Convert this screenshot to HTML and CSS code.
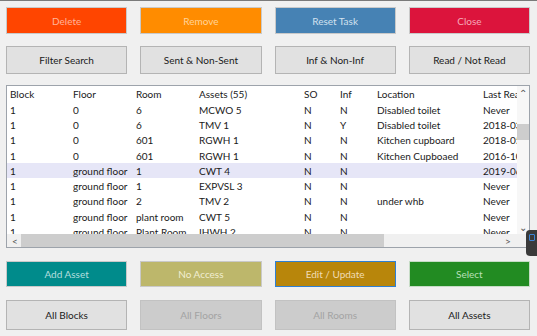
FILE: index.html
```html
<!DOCTYPE html>
<html>
<head>
<meta charset="utf-8">
<link rel="stylesheet" href="styles.css">
</head>
<body>
<div class="app">
  <div class="btn-row r1">
    <button class="btn c-delete">Delete</button>
    <button class="btn c-remove">Remove</button>
    <button class="btn c-reset">Reset Task</button>
    <button class="btn c-close">Close</button>
  </div>
  <div class="btn-row r2">
    <button class="btn plain">Filter Search</button>
    <button class="btn plain">Sent &amp; Non-Sent</button>
    <button class="btn plain">Inf &amp; Non-Inf</button>
    <button class="btn plain">Read / Not Read</button>
  </div>
  <div class="grid-box">
    <div class="grid-view">
      <table class="list">
        <colgroup>
          <col class="w-block"><col class="w-floor"><col class="w-room"><col class="w-asset"><col class="w-so"><col class="w-inf"><col class="w-loc"><col class="w-last">
        </colgroup>
        <thead>
          <tr><th>Block</th><th>Floor</th><th>Room</th><th>Assets (55)</th><th>SO</th><th>Inf</th><th>Location</th><th>Last Read</th></tr>
        </thead>
        <tbody>
          <tr><td>1</td><td>0</td><td>6</td><td>MCWO 5</td><td>N</td><td>N</td><td>Disabled toilet</td><td>Never</td></tr>
          <tr><td>1</td><td>0</td><td>6</td><td>TMV 1</td><td>N</td><td>Y</td><td>Disabled toilet</td><td>2018-03-12</td></tr>
          <tr><td>1</td><td>0</td><td>601</td><td>RGWH 1</td><td>N</td><td>N</td><td>Kitchen cupboard</td><td>2018-05-04</td></tr>
          <tr><td>1</td><td>0</td><td>601</td><td>RGWH 1</td><td>N</td><td>N</td><td>Kitchen Cupboaed</td><td>2016-10-20</td></tr>
          <tr class="sel"><td>1</td><td>ground floor</td><td>1</td><td>CWT 4</td><td>N</td><td>N</td><td></td><td>2019-06-11</td></tr>
          <tr><td>1</td><td>ground floor</td><td>1</td><td>EXPVSL 3</td><td>N</td><td>N</td><td></td><td>Never</td></tr>
          <tr><td>1</td><td>ground floor</td><td>2</td><td>TMV 2</td><td>N</td><td>N</td><td>under whb</td><td>Never</td></tr>
          <tr><td>1</td><td>ground floor</td><td>plant room</td><td>CWT 5</td><td>N</td><td>N</td><td></td><td>Never</td></tr>
          <tr><td>1</td><td>ground floor</td><td>Plant Room</td><td>IHWH 2</td><td>N</td><td>N</td><td></td><td>Never</td></tr>
        </tbody>
      </table>
    </div>
    <div class="vscroll">
      <span class="arr">&#8963;</span>
      <div class="vtrack"><div class="vthumb"></div></div>
      <span class="arr">&#8964;</span>
    </div>
    <div class="hscroll">
      <span class="harr">&lt;</span>
      <div class="htrack"><div class="hthumb"></div></div>
      <span class="harr">&gt;</span>
    </div>
    <div class="corner"></div>
  </div>
  <div class="btn-row r3">
    <button class="btn c-add">Add Asset</button>
    <button class="btn c-noacc">No Access</button>
    <button class="btn c-edit">Edit / Update</button>
    <button class="btn c-select">Select</button>
  </div>
  <div class="btn-row r4">
    <button class="btn plain">All Blocks</button>
    <button class="btn disabled">All Floors</button>
    <button class="btn disabled">All Rooms</button>
    <button class="btn plain">All Assets</button>
  </div>
  <div class="float-widget"><span class="fw-icon"></span></div>
</div>
</body>
</html>
```

FILE: styles.css
```css
* { box-sizing: border-box; }
html, body { margin: 0; padding: 0; }
body {
  width: 537px;
  height: 336px;
  overflow: hidden;
  background: #f0f0f0;
  font-family: "Lato", "Liberation Sans", sans-serif;
  font-size: 10px;
  color: #1a1a1a;
}
.app {
  position: relative;
  width: 537px;
  height: 336px;
  border-top: 1px solid #7a7a7a;
  padding: 6px 7px 0 6px;
  display: flex;
  flex-direction: column;
}
.btn-row {
  display: grid;
  grid-template-columns: repeat(4, 1fr);
  column-gap: 13px;
}
.r1 { height: 27px; }
.r2 { height: 28px; margin-top: 12px; }
.r3 { height: 26px; margin-top: 13px; }
.r4 { height: 30px; margin-top: 13px; }
.btn {
  font: inherit;
  font-size: 10px;
  margin: 0;
  padding: 0;
  border: 1px solid #c9c9c9;
  color: rgba(255,255,255,0.62);
  text-align: center;
}
.c-delete { background: #ff4500; color: #ffb49a; }
.c-remove { background: #ff8c00; color: #ffd39a; }
.c-reset { background: #4682b4; color: #d2e1ef; }
.c-close { background: #dc143c; color: #f6a9b8; }
.c-add { background: #008b8b; color: #b4dede; }
.c-noacc { background: #bdb76b; color: #f1eed2; }
.c-edit { background: #b8860b; color: #f1dcb4; border-color: #2e7fd4; }
.c-select { background: #228b22; color: #b8e0b8; border-color: #c6dcc6; }
.plain {
  background: #e1e1e1;
  border-color: #b4b4b4;
  color: #1a1a1a;
}
.disabled {
  background: #cccccc;
  border-color: #c2c2c2;
  color: #a3a3a3;
}

.grid-box {
  margin-top: 11px;
  height: 163px;
  margin-right: 0;
  border: 1px solid #9da3ab;
  background: #ffffff;
  display: grid;
  grid-template-columns: 1fr 12px;
  grid-template-rows: 1fr 13px;
  overflow: hidden;
}
.grid-view { overflow: hidden; }
.list {
  border-collapse: collapse;
  table-layout: fixed;
  width: 540px;
}
.w-block { width: 63px; }
.w-floor { width: 63px; }
.w-room { width: 63px; }
.w-asset { width: 105px; }
.w-so { width: 36px; }
.w-inf { width: 37px; }
.w-loc { width: 106px; }
.w-last { width: 67px; }
.list th, .list td {
  text-align: left;
  font-weight: normal;
  padding: 0 0 0 3px;
  white-space: nowrap;
  overflow: hidden;
}
.list th { height: 16px; }
.list td { height: 15.3px; }
.list tr.sel td { background: #e6e6f7; }

.vscroll {
  display: flex;
  flex-direction: column;
  align-items: center;
  background: #f7f7f7;
}
.arr {
  height: 14px;
  line-height: 14px;
  font-size: 10px;
  color: #555;
}
.vtrack { flex: 1; width: 100%; position: relative; }
.vthumb {
  margin-top: 24px;
  height: 16px;
  width: 100%;
  background: #cdcdcd;
}
.hscroll {
  display: flex;
  align-items: center;
  background: #f0f0f0;
  padding: 0 4px 0 3px;
}
.harr { width: 10px; font-size: 10px; color: #555; text-align: center; }
.htrack { flex: 1; height: 100%; display: flex; align-items: stretch; }
.hthumb { width: 363px; background: #cdcdcd; margin-left: 1px; }
.corner { background: #f0f0f0; }

.float-widget {
  position: absolute;
  right: 0;
  top: 229px;
  width: 11px;
  height: 26px;
  background: #3a3a3a;
  border-radius: 4px 0 0 4px;
}
.fw-icon {
  position: absolute;
  left: 3px;
  top: 4px;
  width: 6px;
  height: 7px;
  border: 1px solid #3d84d6;
  border-radius: 1px;
}
```
